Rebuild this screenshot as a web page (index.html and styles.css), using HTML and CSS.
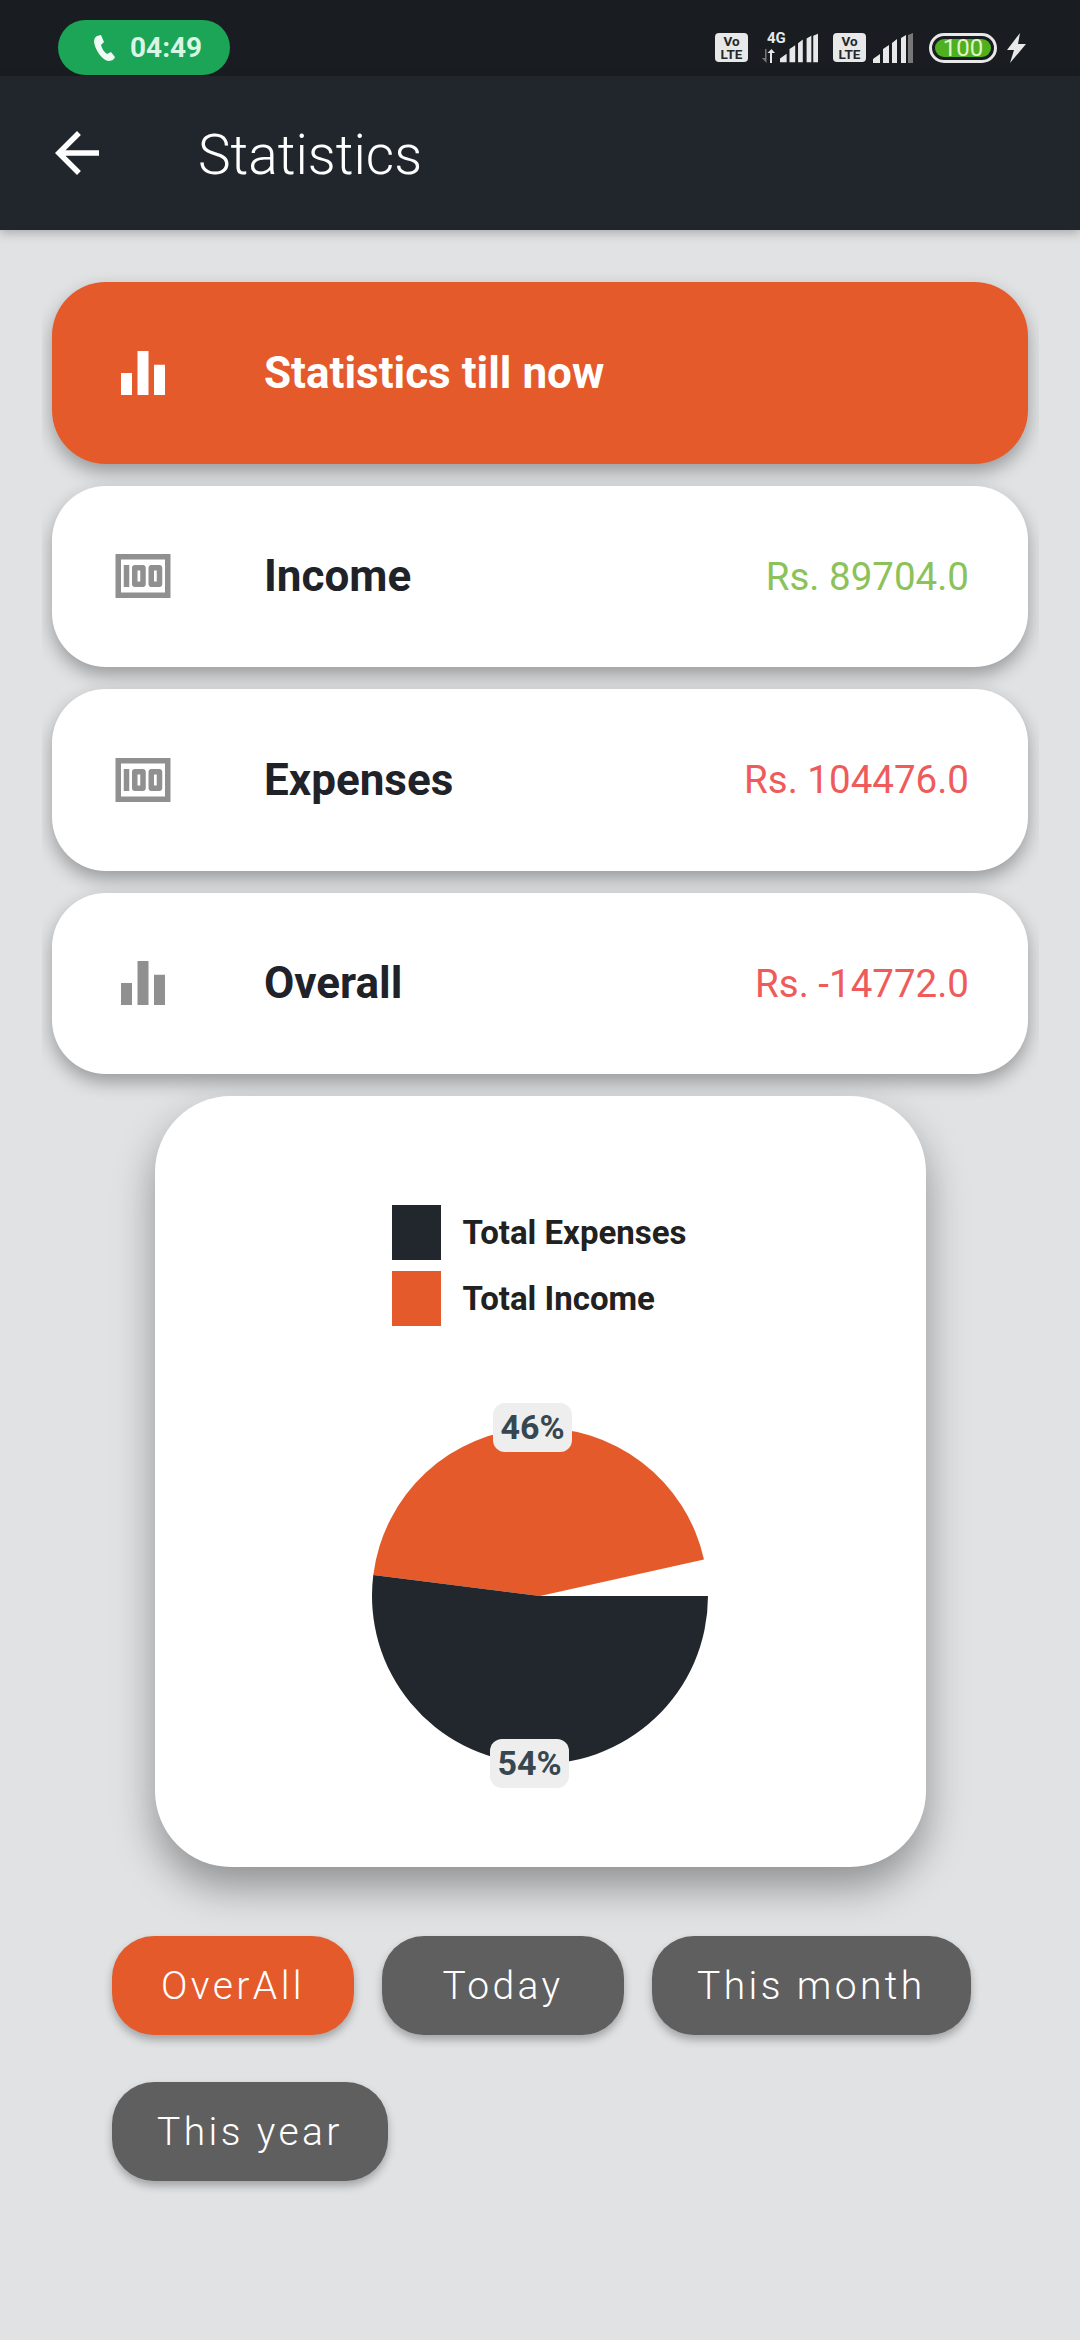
FILE: index.html
```html
<!DOCTYPE html>
<html lang="en">

<head>
    <meta charset="UTF-8">
    <meta name="viewport" content="width=device-width, initial-scale=1.0">
    <title>Statistics</title>
    <link rel="stylesheet" href="styles.css">
</head>

<body>
    <div class="status-bar">
        <div class="call-pill">
            <svg class="call-icon" viewBox="0 0 22 26"><path d="M4 1L8 0l3 7-3 3c1 4 3 7 6 9l4-2 4 5c-1 3-4 4-7 4C8 24 2 14 1 7c0-3 1-5 3-6z"/></svg>
            <span>04:49</span>
        </div>
        <div class="status-icons">
            <div class="volte">Vo<br>LTE</div>
            <div class="net">
                <span class="net-label">4G</span>
                <svg class="net-arrows" viewBox="0 0 14 14"><path d="M0 9h3V0h1.500v14z" fill="#777"/><path d="M8 14V4H5.500L9.500 0l3.500 4h-3v10z" fill="#e8e8e8"/></svg>
                <svg class="signal" viewBox="0 0 40 30"><path d="M0 30v-4l7-5v9zM10 30V16l6-4v18zM19 30V10l5-4v24zM28 30V5l5-3v28zM35 30V2l5-2v30z"/></svg>
            </div>
            <div class="volte">Vo<br>LTE</div>
            <svg class="signal signal-weak" viewBox="0 0 40 30"><path d="M0 30v-4l7-5v9zM10 30V16l6-4v18zM19 30V10l5-4v24zM28 30V5l5-3v28z"/><path d="M35 30V2l5-2v30z" fill="#777"/></svg>
            <div class="battery"><span class="battery-level">100</span></div>
            <svg class="bolt" viewBox="0 0 19 30"><path d="M13 0L0 17h7L3 30 19 11h-8z"/></svg>
        </div>
    </div>

    <div class="app-bar">
        <svg class="back-icon" viewBox="0 0 24 24"><path d="M20 11H7.830l5.590-5.590L12 4l-8 8 8 8 1.410-1.410L7.830 13H20v-2z"/></svg>
        <h1 class="page-title">Statistics</h1>
    </div>

    <div class="stat-list">
        <div class="stat-card stat-card-active">
            <svg class="stat-icon" viewBox="0 0 24 24"><path d="M10 20h4V4h-4v16zm-6 0h4v-8H4v8zM16 9v11h4V9h-4z"/></svg>
            <span class="stat-name">Statistics till now</span>
        </div>
        <div class="stat-card">
            <svg class="stat-icon" viewBox="0 0 24 24"><path d="M5 8h2v8H5zm7 0H9c-.55 0-1 .45-1 1v6c0 .55.45 1 1 1h3c.55 0 1-.45 1-1V9c0-.55-.45-1-1-1zm-1 6h-1v-4h1v4zm7-6h-3c-.55 0-1 .45-1 1v6c0 .55.45 1 1 1h3c.55 0 1-.45 1-1V9c0-.55-.45-1-1-1zm-1 6h-1v-4h1v4z"/><path d="M2 4v16h20V4H2zm2 14V6h16v12H4z"/></svg>
            <span class="stat-name">Income</span>
            <span class="stat-value stat-plus">Rs. 89704.0</span>
        </div>
        <div class="stat-card">
            <svg class="stat-icon" viewBox="0 0 24 24"><path d="M5 8h2v8H5zm7 0H9c-.55 0-1 .45-1 1v6c0 .55.45 1 1 1h3c.55 0 1-.45 1-1V9c0-.55-.45-1-1-1zm-1 6h-1v-4h1v4zm7-6h-3c-.55 0-1 .45-1 1v6c0 .55.45 1 1 1h3c.55 0 1-.45 1-1V9c0-.55-.45-1-1-1zm-1 6h-1v-4h1v4z"/><path d="M2 4v16h20V4H2zm2 14V6h16v12H4z"/></svg>
            <span class="stat-name">Expenses</span>
            <span class="stat-value stat-minus">Rs. 104476.0</span>
        </div>
        <div class="stat-card">
            <svg class="stat-icon" viewBox="0 0 24 24"><path d="M10 20h4V4h-4v16zm-6 0h4v-8H4v8zM16 9v11h4V9h-4z"/></svg>
            <span class="stat-name">Overall</span>
            <span class="stat-value stat-minus">Rs. -14772.0</span>
        </div>
    </div>

    <div class="chart-card">
        <div class="legend">
            <div class="legend-row"><span class="swatch swatch-dark"></span>Total Expenses</div>
            <div class="legend-row"><span class="swatch swatch-orange"></span>Total Income</div>
        </div>
        <div class="pie">
            <svg class="pie-svg" viewBox="-168 -168 336 336">
                <path d="M0 0L-166.700 -21A168 168 0 0 1 164 -36.500Z" fill="#e55a2b"/>
                <path d="M0 0H168A168 168 0 1 1 -166.700 -21Z" fill="#22272e"/>
            </svg>
            <span class="pie-label pie-label-top">46%</span>
            <span class="pie-label pie-label-bottom">54%</span>
        </div>
    </div>

    <div class="filters">
        <button class="filter filter-active">OverAll</button>
        <button class="filter">Today</button>
        <button class="filter">This month</button>
        <button class="filter">This year</button>
    </div>
</body>

</html>
```

FILE: styles.css
```css
* {
    box-sizing: border-box;
}

html,
body {
    margin: 0;
    height: 2340px;
    overflow: hidden;
}

body {
    background: #e0e2e4;
    font-family: Roboto, sans-serif;
}

/* status bar */
.status-bar {
    display: flex;
    justify-content: space-between;
    height: 76px;
    padding: 20px 54px 0 58px;
    background: #191c21;
}

.call-pill {
    display: flex;
    align-items: center;
    width: 172px;
    height: 55px;
    padding-left: 35px;
    border-radius: 28px;
    background: #1ca457;
    color: #d9f5e3;
    font-size: 28px;
    font-weight: 700;
}

.call-icon {
    width: 22px;
    height: 26px;
    margin-right: 15px;
    fill: #eefaf2;
}

.status-icons {
    display: flex;
    align-items: flex-start;
    padding-top: 13px;
}

.volte {
    width: 33px;
    height: 29px;
    border-radius: 4px;
    background: #e8e8e8;
    color: #23272c;
    font-size: 13.5px;
    font-weight: 700;
    line-height: 13px;
    text-align: center;
    padding-top: 2px;
}

.net {
    position: relative;
    display: flex;
    align-items: flex-end;
    width: 56px;
    height: 30px;
    margin: 0 15px 0 14px;
}

.net-label {
    position: absolute;
    left: 5px;
    top: -4px;
    color: #e8e8e8;
    font-size: 15px;
    font-weight: 700;
}

.net-arrows {
    width: 14px;
    height: 14px;
    margin-right: 4px;
}

.signal {
    width: 38px;
    height: 30px;
    fill: #e8e8e8;
}

.signal-weak {
    width: 40px;
    margin-left: 7px;
}

.battery {
    display: flex;
    width: 68px;
    height: 30px;
    margin-left: 16px;
    padding: 3px;
    border: 3px solid #e8e8e8;
    border-radius: 15px;
}

.battery-level {
    flex: 1;
    border-radius: 9px;
    background: #4fb01e;
    color: #dff3cf;
    font-size: 24px;
    line-height: 18px;
    text-align: center;
}

.bolt {
    width: 19px;
    height: 30px;
    margin-left: 10px;
    fill: #e8e8e8;
}

/* app bar */
.app-bar {
    display: flex;
    align-items: center;
    height: 154px;
    padding-left: 44px;
    background: #21262d;
    box-shadow: 0 3px 10px rgba(0, 0, 0, 0.25);
}

.back-icon {
    width: 66px;
    height: 66px;
    fill: #fff;
}

.page-title {
    margin: 3px 0 0 88px;
    color: #fff;
    font-size: 55px;
    font-weight: 300;
}

/* stat cards, the shadow is cut at the sides of the list */
.stat-list {
    margin: 0 41px -30px 42px;
    padding: 52px 11px 30px 10px;
    overflow: hidden;
}

.stat-card {
    display: flex;
    align-items: center;
    height: 181.5px;
    margin-bottom: 22px;
    padding: 0 59px 0 58px;
    border-radius: 54px;
    background: #fff;
    box-shadow: 0 8px 18px rgba(0, 0, 0, 0.32);
}

.stat-card-active {
    background: #e55a2b;
}

.stat-icon {
    width: 66px;
    height: 66px;
    flex-shrink: 0;
    fill: #909090;
}

.stat-card-active .stat-icon {
    fill: #fff;
}

.stat-name {
    flex: 1;
    margin-left: 88px;
    color: #1f2329;
    font-size: 44px;
    font-weight: 700;
}

.stat-card-active .stat-name {
    color: #fff;
}

.stat-value {
    font-size: 38.5px;
}

.stat-plus {
    color: #8bc25a;
}

.stat-minus {
    color: #ef5b5b;
}

/* chart */
.chart-card {
    position: relative;
    width: 771px;
    height: 771px;
    margin: 0 auto;
    padding-top: 109px;
    border-radius: 76px;
    background: #fff;
    box-shadow: 0 20px 40px rgba(0, 0, 0, 0.36);
}

.legend {
    display: flex;
    flex-direction: column;
    align-items: flex-start;
    gap: 11px;
    width: 297px;
    margin: 0 auto;
}

.legend-row {
    display: flex;
    align-items: center;
    color: #212121;
    font-size: 33px;
    font-weight: 700;
    white-space: nowrap;
}

.swatch {
    width: 49px;
    height: 55px;
    margin-right: 22px;
}

.swatch-dark {
    background: #22272e;
}

.swatch-orange {
    background: #e55a2b;
}

.pie {
    position: relative;
    width: 336px;
    height: 336px;
    margin: 102px auto 0;
}

.pie-svg {
    display: block;
    width: 336px;
    height: 336px;
}

.pie-label {
    position: absolute;
    width: 79px;
    height: 49px;
    border-radius: 12px;
    background: #eeeeee;
    color: #37474f;
    font-size: 34px;
    font-weight: 700;
    line-height: 49px;
    text-align: center;
}

.pie-label-top {
    left: 121px;
    top: -25px;
}

.pie-label-bottom {
    left: 118px;
    top: 311px;
}

/* filter buttons */
.filters {
    display: flex;
    flex-wrap: wrap;
    gap: 47px 28px;
    margin-top: 69px;
    padding: 0 100px 0 112px;
}

.filter {
    min-width: 242px;
    height: 99px;
    padding: 0 45px;
    border: none;
    border-radius: 42px;
    background: #5f5f5f;
    box-shadow: 0 5px 9px rgba(0, 0, 0, 0.28);
    color: #fff;
    font-family: Roboto, sans-serif;
    font-size: 39px;
    font-weight: 300;
    letter-spacing: 3.4px;
}

.filter-active {
    background: #e55a2b;
}
```
